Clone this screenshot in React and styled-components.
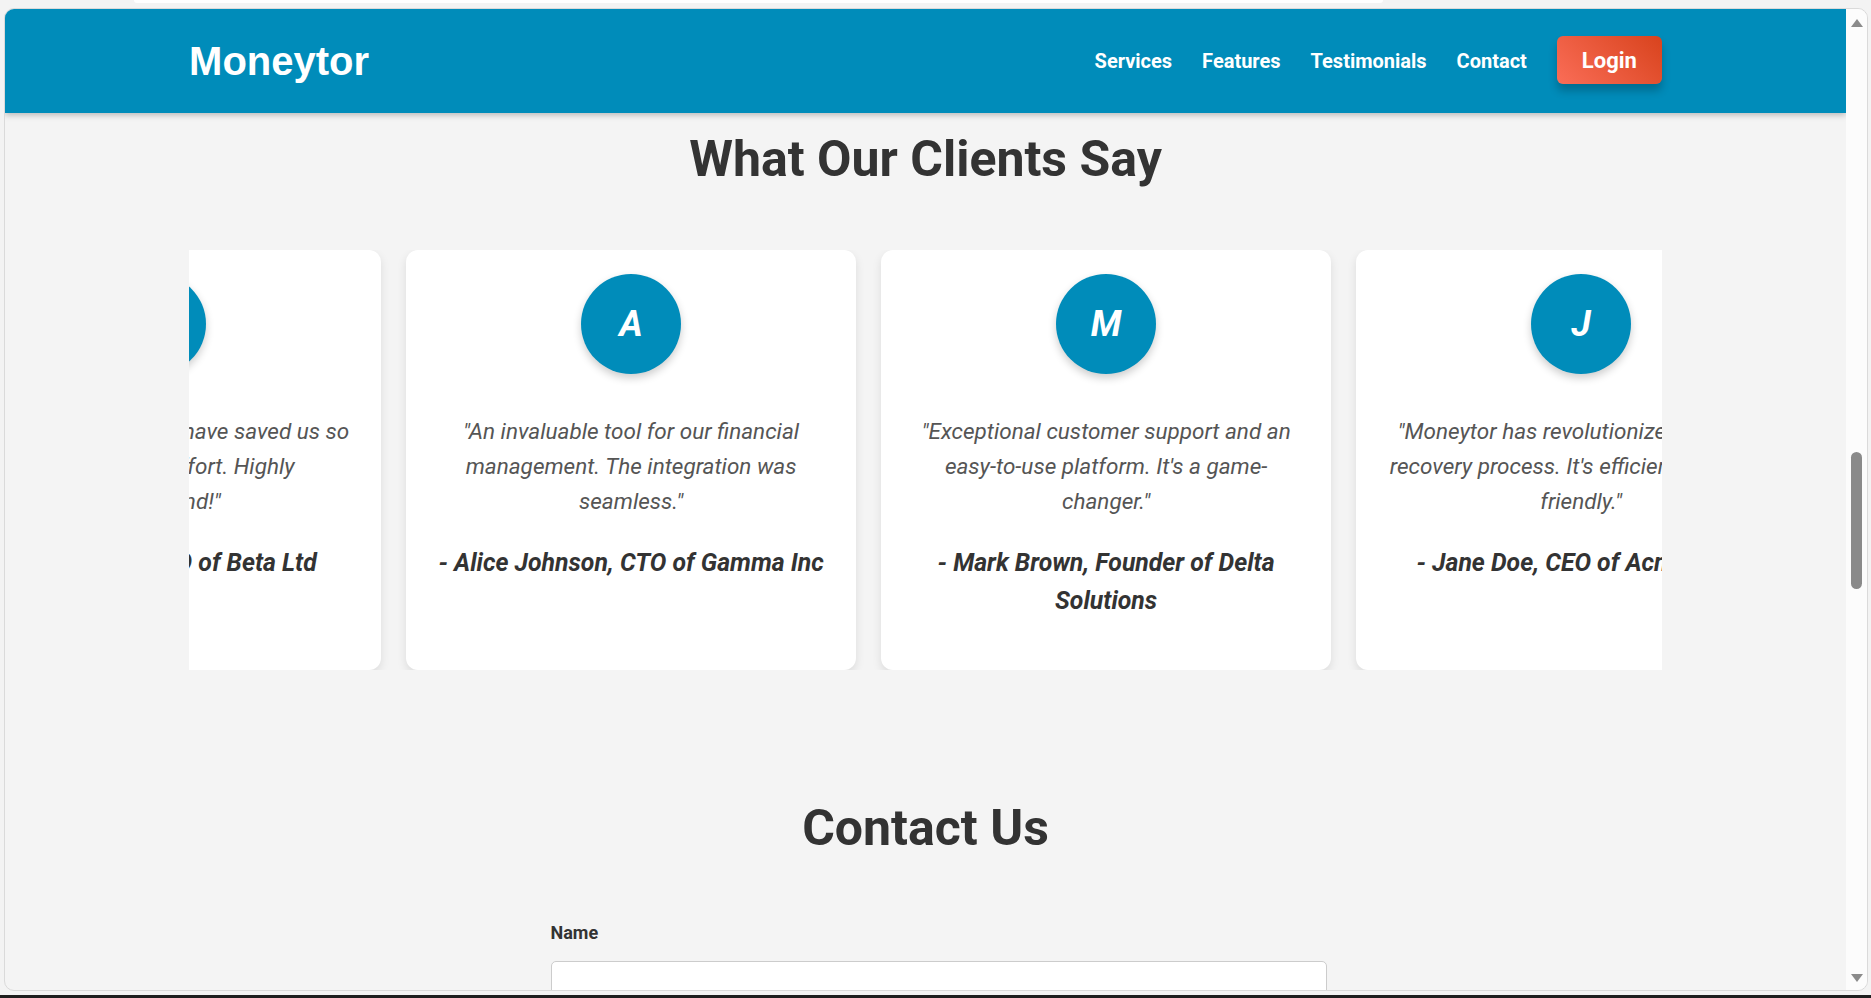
import React from 'react'
import styled, { createGlobalStyle } from 'styled-components'

const Globalstyle = createGlobalStyle`
  html, body { margin: 0; padding: 0; overflow: hidden; }
  body { font-family: Roboto, "Noto Sans", Arial, sans-serif; background: #f3f3f3; }
  * { box-sizing: border-box; }
`

const testimonials = [
  { initial: 'J', quote: '"The automation tools have saved us so much time and effort. Highly recommend!"', author: '- John Smith, CFO of Beta Ltd' },
  { initial: 'A', quote: '"An invaluable tool for our financial management. The integration was seamless."', author: '- Alice Johnson, CTO of Gamma Inc' },
  { initial: 'M', quote: '"Exceptional customer support and an easy-to-use platform. It\'s a game-changer."', author: '- Mark Brown, Founder of Delta Solutions' },
  { initial: 'J', quote: '"Moneytor has revolutionized our debt recovery process. It\'s efficient and user-friendly."', author: '- Jane Doe, CEO of Acme Corp' },
]

const Frame = styled.div`
  height: 100vh;
  display: flex;
  flex-direction: column;
  background: #f3f3f3;
`
const TopStrip = styled.div`
  height: 8px;
  flex-shrink: 0;
`
const TopTab = styled.div`
  margin-left: 134px;
  width: 1249px;
  height: 3px;
  background: #fff;
  border-radius: 0 0 6px 6px;
`
const Window = styled.div`
  flex: 1;
  margin: 0 3px 4px 4px;
  display: flex;
  border: 1px solid #dadada;
  border-radius: 10px;
  overflow: hidden;
  background: #f4f4f4;
`
const BottomBar = styled.div`
  height: 3px;
  flex-shrink: 0;
  background: #1e1e1e;
`
const Main = styled.main`
  flex: 1;
  min-width: 0;
  overflow: hidden;
  display: flex;
  flex-direction: column;
`
const Scrollbar = styled.div`
  width: 21px;
  flex-shrink: 0;
  background: #fcfcfc;
  display: flex;
  flex-direction: column;
  align-items: center;
  padding: 10px 0 8px;
`
const Arrow = styled.div`
  width: 0;
  height: 0;
  border-left: 6px solid transparent;
  border-right: 6px solid transparent;
  ${p => p.$down ? 'border-top: 8px solid #8b8b8b;' : 'border-bottom: 8px solid #8b8b8b;'}
`
const Thumb = styled.div`
  width: 11px;
  height: 137px;
  margin-top: 425px;
  border-radius: 6px;
  background: #8a8a8a;
`
const Spacer = styled.div`
  flex: 1;
`

const Header = styled.header`
  height: 104px;
  flex-shrink: 0;
  background: #008cba;
  box-shadow: 0 2px 6px rgba(0, 0, 0, 0.25);
  position: relative;
  z-index: 2;
`
const Container = styled.div`
  width: 80%;
  margin: 0 auto;
`
const HeaderInner = styled(Container)`
  height: 100%;
  display: flex;
  justify-content: space-between;
  align-items: center;
`
const Logo = styled.h1`
  margin: 0;
  color: #fff;
  font-family: "Liberation Sans", Arial, sans-serif;
  font-size: 40px;
  font-weight: 700;
`
const Nav = styled.nav`
  display: flex;
  align-items: center;
  gap: 30px;
`
const NavLink = styled.a`
  color: #fff;
  font-size: 20px;
  font-weight: 700;
  text-decoration: none;
`
const LoginButton = styled.button`
  height: 48px;
  margin-bottom: 2px;
  padding: 0 25px;
  border: none;
  border-radius: 6px;
  color: #fff;
  font-family: Roboto, sans-serif;
  font-size: 22px;
  font-weight: 700;
  background: linear-gradient(45deg, #fa6d57, #d8431d);
  box-shadow: 0 7px 8px rgba(0, 0, 0, 0.22);
`

const Section = styled.section`
  padding: ${p => p.$pad};
`
const SectionTitle = styled.h2`
  margin: 0;
  text-align: center;
  color: #333;
  font-size: 50px;
  font-weight: 700;
  line-height: 60px;
`
const Carousel = styled(Container)`
  margin-top: 61px;
  overflow: hidden;
`
const Track = styled.div`
  display: flex;
  gap: 25px;
  transform: translateX(${p => p.$offset}px);
`
const Card = styled.div`
  flex: 0 0 450px;
  background: #fff;
  border-radius: 12px;
  box-shadow: 0 4px 10px rgba(0, 0, 0, 0.1);
  padding: 24px 25px 25px;
  text-align: center;
`
const Avatar = styled.div`
  width: 100px;
  height: 100px;
  margin: 0 auto 40px;
  border-radius: 50%;
  background: #008cba;
  box-shadow: 0 4px 8px rgba(0, 0, 0, 0.2);
  color: #fff;
  font-size: 36px;
  font-weight: 700;
  font-style: italic;
  display: flex;
  align-items: center;
  justify-content: center;
`
const Quote = styled.p`
  margin: 0;
  color: #555;
  font-size: 22.5px;
  font-style: italic;
  line-height: 35.2px;
`
const Author = styled.p`
  margin: 24px 0 25px;
  color: #333;
  font-size: 24.8px;
  font-weight: 700;
  font-style: italic;
  line-height: 38px;
`
const Form = styled.form`
  width: 750px;
  margin: 64px auto 0;
`
const Label = styled.label`
  display: block;
  color: #333;
  font-size: 18px;
  font-weight: 700;
  margin-bottom: 18px;
`
const Input = styled.input`
  box-sizing: content-box;
  width: 100%;
  height: 24px;
  padding: 12px;
  border: 1px solid #ccc;
  border-radius: 5px;
  background: #fff;
  font-size: 16px;
`

function App() {
  return (
    <>
      <Globalstyle />
      <Frame>
        <TopStrip><TopTab /></TopStrip>
        <Window>
          <Main>
            <Header>
              <HeaderInner>
                <Logo>Moneytor</Logo>
                <Nav>
                  <NavLink href="#services">Services</NavLink>
                  <NavLink href="#features">Features</NavLink>
                  <NavLink href="#testimonials">Testimonials</NavLink>
                  <NavLink href="#contact">Contact</NavLink>
                  <LoginButton>Login</LoginButton>
                </Nav>
              </HeaderInner>
            </Header>

            <Section id="testimonials" $pad="16px 0 0">
              <SectionTitle>What Our Clients Say</SectionTitle>
              <Carousel>
                <Track $offset={-258}>
                  {testimonials.map((t, i) => (
                    <Card key={i}>
                      <Avatar>{t.initial}</Avatar>
                      <Quote>{t.quote}</Quote>
                      <Author>{t.author}</Author>
                    </Card>
                  ))}
                  <Card>
                    <Avatar>{testimonials[0].initial}</Avatar>
                    <Quote>{testimonials[0].quote}</Quote>
                    <Author>{testimonials[0].author}</Author>
                  </Card>
                </Track>
              </Carousel>
            </Section>

            <Section id="contact" $pad="128px 0 0">
              <SectionTitle>Contact Us</SectionTitle>
              <Form>
                <Label htmlFor="name">Name</Label>
                <Input id="name" type="text" />
              </Form>
            </Section>
          </Main>
          <Scrollbar>
            <Arrow />
            <Thumb />
            <Spacer />
            <Arrow $down />
          </Scrollbar>
        </Window>
        <BottomBar />
      </Frame>
    </>
  )
}

export default App
